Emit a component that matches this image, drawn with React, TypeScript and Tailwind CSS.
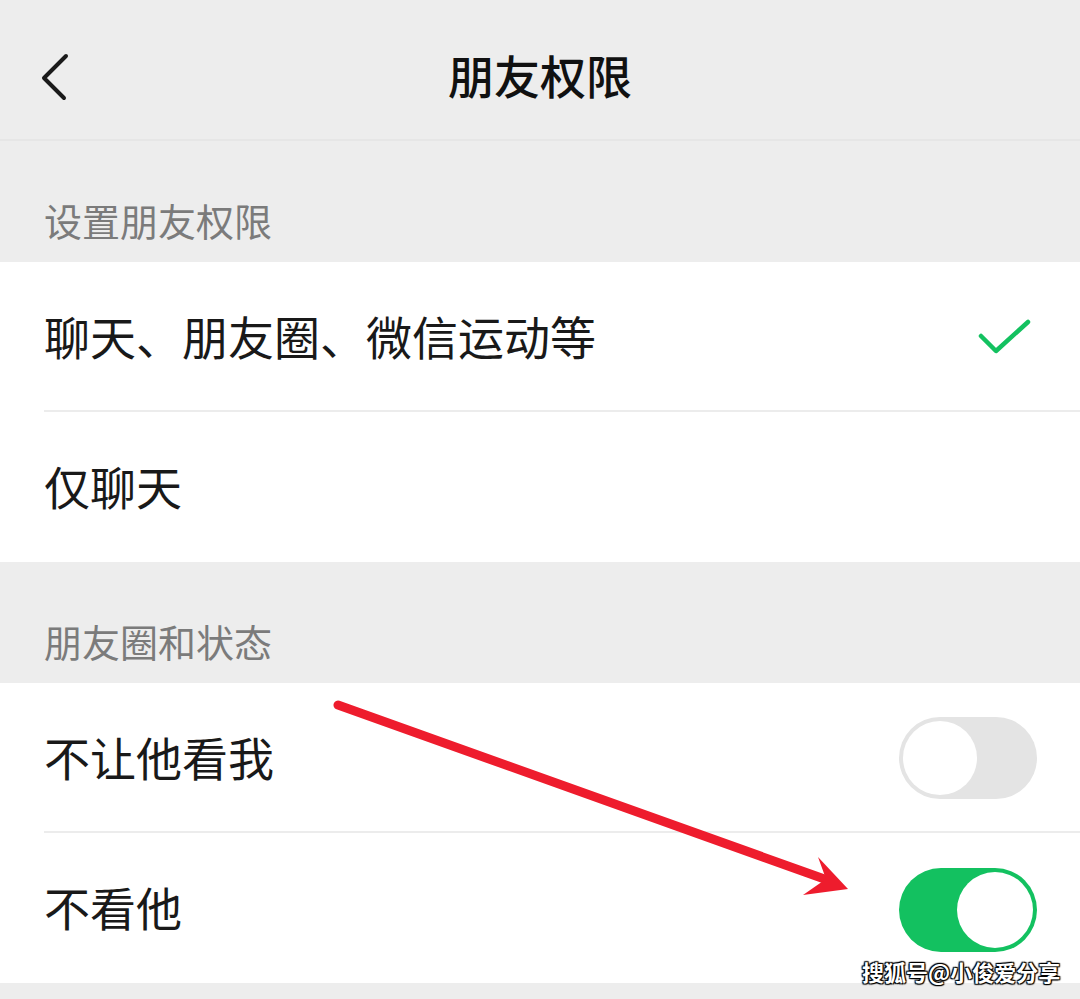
import React from "react";

const font = { fontFamily: '"Noto Sans CJK SC", "Noto Sans", sans-serif' };

function Toggle({ on }: { on: boolean }) {
  if (on) {
    return (
      <div className="mt-[4px] flex h-[84px] w-[138px] items-center justify-end rounded-full bg-[#13c160] p-[4px]">
        <div className="h-[76px] w-[76px] rounded-full bg-white" />
      </div>
    );
  }
  return (
    <div className="flex h-[82px] w-[138px] items-center rounded-full bg-[#e4e4e4] p-[4px]">
      <div className="h-[74px] w-[74px] rounded-full bg-white" />
    </div>
  );
}

function Row({ label, right, divider }: { label: string; right?: React.ReactNode; divider?: boolean }) {
  return (
    <div className="relative flex h-[150px] items-center justify-between bg-white pl-[44px] pr-[43px]">
      <span className="mb-[4px] text-[46px] leading-none text-[#191919]">{label}</span>
      {right}
      {divider && <div className="absolute bottom-0 left-[44px] right-0 h-[2px] bg-[#ececec]" />}
    </div>
  );
}

function SectionTitle({ text }: { text: string }) {
  return (
    <div className="flex h-[121px] items-center bg-[#ededed] pl-[44px]">
      <span className="mt-[36px] text-[38px] leading-none text-[#7b7b7b]">{text}</span>
    </div>
  );
}

export default function App() {
  return (
    <div className="relative h-[999px] w-[1080px] overflow-hidden bg-[#ededed]" style={font}>
      <div className="relative flex h-[141px] items-center justify-center border-b-2 border-[#e6e6e6] bg-[#ededed]">
        <svg className="absolute left-[36px] top-[52px]" width="40" height="50" viewBox="0 0 40 50">
          <path d="M30 4 L8 26 L28 46" fill="none" stroke="#1a1a1a" strokeWidth="4" strokeLinecap="round" strokeLinejoin="round" />
        </svg>
        <span className="mt-[8px] text-[46px] font-medium leading-none text-[#111]">朋友权限</span>
      </div>

      <SectionTitle text="设置朋友权限" />
      <Row
        label="聊天、朋友圈、微信运动等"
        divider
        right={
          <svg className="mr-[4px] mt-[2px]" width="56" height="40" viewBox="0 0 56 40">
            <path d="M4 18 L19 33 L51 4" fill="none" stroke="#13c160" strokeWidth="4.5" strokeLinecap="round" strokeLinejoin="round" />
          </svg>
        }
      />
      <Row label="仅聊天" />

      <SectionTitle text="朋友圈和状态" />
      <Row label="不让他看我" divider right={<Toggle on={false} />} />
      <Row label="不看他" right={<Toggle on />} />

      <svg className="pointer-events-none absolute left-0 top-0" width="1080" height="999" viewBox="0 0 1080 999">
        <line x1="338" y1="705" x2="830" y2="881" stroke="#ee1c2d" strokeWidth="9" strokeLinecap="round" />
        <polygon points="848,889 818,857 826,879 803,895" fill="#ee1c2d" />
      </svg>

      <span
        className="absolute left-[862px] top-[960px] text-[22px] font-bold leading-none text-white"
        style={{ textShadow: "0 0 2px #000, 1px 1px 1px #000, -1px -1px 1px #000, 1px -1px 1px #000, -1px 1px 1px #000" }}
      >
        搜狐号@小俊爱分享
      </span>
    </div>
  );
}
